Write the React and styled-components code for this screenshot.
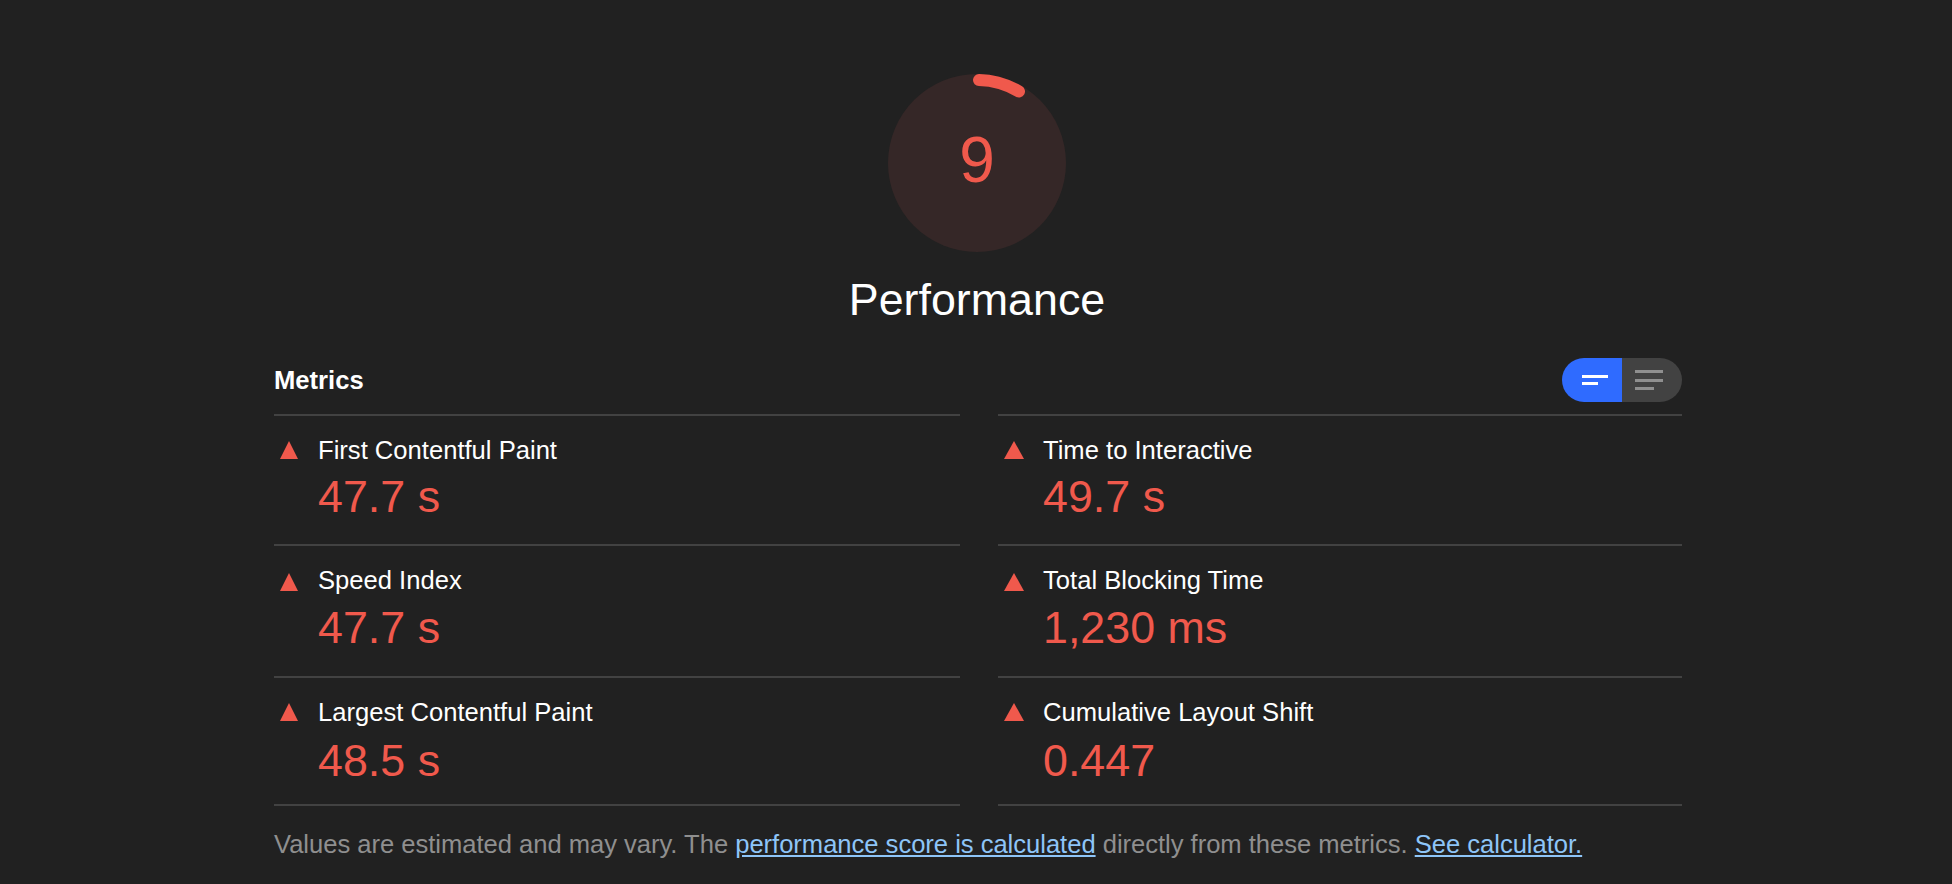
import React from 'react';
import styled, { createGlobalStyle } from 'styled-components';

const GlobalStyle = createGlobalStyle`
  html, body {
    margin: 0;
    padding: 0;
    height: 884px;
    overflow: hidden;
    background: #212121;
  }
  * { box-sizing: border-box; }
`;

const Page = styled.div`
  width: 1952px;
  height: 884px;
  padding: 74px 270px 0 274px;
  background: #212121;
  color: #fff;
  font-family: "Liberation Sans", Arial, sans-serif;
`;

const ScoreHeader = styled.header`
  display: flex;
  flex-direction: column;
  align-items: center;
  padding-right: 2px;
`;

const GaugeWrap = styled.div`
  position: relative;
  width: 178px;
  height: 178px;
`;

const GaugeSvg = styled.svg`
  display: block;
`;

const GaugeValue = styled.div`
  position: absolute;
  inset: 0;
  padding-bottom: 6px;
  display: flex;
  align-items: center;
  justify-content: center;
  font-size: 64px;
  color: #f0594c;
`;

const CategoryTitle = styled.h1`
  margin: 19px 0 0;
  font-size: 44.8px;
  line-height: 56px;
  font-weight: 400;
  color: #fff;
`;

const MetricsHeader = styled.div`
  display: flex;
  justify-content: space-between;
  align-items: center;
  height: 44px;
  margin-top: 31px;
  margin-bottom: 12px;
`;

const MetricsTitle = styled.h2`
  margin: 0;
  font-size: 25.6px;
  font-weight: 700;
`;

const Toggle = styled.div`
  display: flex;
  width: 120px;
  height: 44px;
  border-radius: 22px;
  overflow: hidden;
`;

const ToggleSide = styled.div`
  flex: 1;
  display: flex;
  align-items: center;
  justify-content: center;
  padding: ${({ $active }) => ($active ? '0 0 0 6px' : '0 6px 0 0')};
  background: ${({ $active }) => ($active ? '#2f6bff' : '#424242')};
`;

const ToggleIcon = styled.svg`
  display: block;
`;

const MetricsGrid = styled.div`
  display: grid;
  grid-template-columns: 686px 684px;
  column-gap: 38px;
`;

const MetricRow = styled.div`
  display: grid;
  grid-template-columns: ${({ $textStart }) => $textStart}px 1fr;
  height: ${({ $height }) => $height}px;
  padding-top: 19px;
  border-top: 2px solid #424242;
  ${({ $last }) => $last && 'border-bottom: 2px solid #424242;'}
`;

const MetricIcon = styled.svg`
  display: block;
  margin: ${({ $top }) => $top}px 0 0 6px;
`;

const MetricTitle = styled.div`
  font-size: 25.6px;
  line-height: 30px;
  color: #fff;
`;

const MetricValue = styled.div`
  margin-top: ${({ $gap }) => $gap}px;
  font-size: 44.8px;
  line-height: 52px;
  color: #f0594c;
`;

const Footnote = styled.p`
  margin: 20px 0 0;
  font-size: 25.6px;
  line-height: 36px;
  letter-spacing: -0.03px;
  color: #8f8f8f;
  white-space: nowrap;
`;

const NoteLink = styled.a`
  color: #8ec5f8;
  text-decoration: underline;
`;

// rows aren't quite even in the capture, so gaps are per row
const rows = [
  { height: 130, gap: 4.5, iconTop: 6 },
  { height: 132, gap: 6, iconTop: 8 },
  { height: 130, gap: 6.5, iconTop: 6, last: true },
];

const columns = [
  {
    textStart: 44,
    iconWidth: 18,
    items: [
      { title: 'First Contentful Paint', value: '47.7 s' },
      { title: 'Speed Index', value: '47.7 s' },
      { title: 'Largest Contentful Paint', value: '48.5 s' },
    ],
  },
  {
    textStart: 45,
    iconWidth: 20,
    items: [
      { title: 'Time to Interactive', value: '49.7 s' },
      { title: 'Total Blocking Time', value: '1,230 ms' },
      { title: 'Cumulative Layout Shift', value: '0.447' },
    ],
  },
];

function Metric({ title, value, row, textStart, iconWidth }) {
  return (
    <MetricRow $height={row.height} $last={row.last} $textStart={textStart}>
      <MetricIcon $top={row.iconTop} width={iconWidth} height="18" viewBox="0 0 18 18" preserveAspectRatio="none">
        <path d="M9 0 L18 18 L0 18 Z" fill="#f0594c" />
      </MetricIcon>
      <div>
        <MetricTitle>{title}</MetricTitle>
        <MetricValue $gap={row.gap}>{value}</MetricValue>
      </div>
    </MetricRow>
  );
}

export default function App() {
  return (
    <>
      <GlobalStyle />
      <Page>
        <ScoreHeader>
          <GaugeWrap>
            <GaugeSvg width="178" height="178" viewBox="0 0 178 178">
              <circle cx="89" cy="89" r="89" fill="#352727" />
              <path
                d="M 91 6 A 83 83 0 0 1 131 17.5"
                fill="none"
                stroke="#f0594c"
                strokeWidth="12"
                strokeLinecap="round"
              />
            </GaugeSvg>
            <GaugeValue>9</GaugeValue>
          </GaugeWrap>
          <CategoryTitle>Performance</CategoryTitle>
        </ScoreHeader>

        <MetricsHeader>
          <MetricsTitle>Metrics</MetricsTitle>
          <Toggle>
            <ToggleSide $active>
              <ToggleIcon width="26" height="10" viewBox="0 0 26 10">
                <rect x="0" y="0" width="26" height="3" fill="#fff" />
                <rect x="0" y="7" width="16" height="3" fill="#fff" />
              </ToggleIcon>
            </ToggleSide>
            <ToggleSide>
              <ToggleIcon width="28" height="20" viewBox="0 0 28 20">
                <rect x="0" y="0" width="28" height="3" fill="#8f8f8f" />
                <rect x="0" y="9" width="28" height="3" fill="#8f8f8f" />
                <rect x="0" y="17" width="19" height="3" fill="#8f8f8f" />
              </ToggleIcon>
            </ToggleSide>
          </Toggle>
        </MetricsHeader>

        <MetricsGrid>
          {columns.map((col) => (
            <div key={col.textStart}>
              {col.items.map((m, i) => (
                <Metric
                  key={m.title}
                  {...m}
                  row={rows[i]}
                  textStart={col.textStart}
                  iconWidth={col.iconWidth}
                />
              ))}
            </div>
          ))}
        </MetricsGrid>

        <Footnote>
          Values are estimated and may vary. The{' '}
          <NoteLink href="#">performance score is calculated</NoteLink> directly from these metrics.{' '}
          <NoteLink href="#">See calculator.</NoteLink>
        </Footnote>
      </Page>
    </>
  );
}
